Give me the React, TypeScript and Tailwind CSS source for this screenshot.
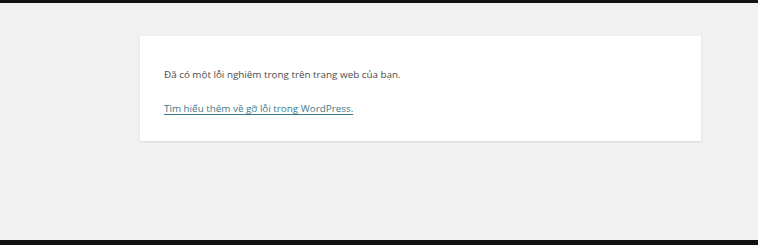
export default function App() {
  return (
    <div className="h-[245px] w-[758px] flex flex-col bg-[#f1f1f1] overflow-hidden" style={{ fontFamily: '"Open Sans", "Noto Sans", sans-serif' }}>
      <div className="h-[3px] bg-[#111111]" />
      <div className="flex-1 pt-[33px] pl-[140px]">
        <div className="w-[561px] h-[105px] bg-white shadow-[0_1px_2px_rgba(0,0,0,0.1)] pl-[24px] pt-[31px] text-[9.85px] leading-[14px] text-[#4a4a4a]">
          <p>Đã có một lỗi nghiêm trọng trên trang web của bạn.</p>
          <p className="mt-[20px]">
            <a href="#" className="text-[#3a7a8a] underline underline-offset-2">Tìm hiểu thêm về gỡ lỗi trong WordPress.</a>
          </p>
        </div>
      </div>
      <div className="h-[5px] bg-[#111111]" />
    </div>
  );
}
